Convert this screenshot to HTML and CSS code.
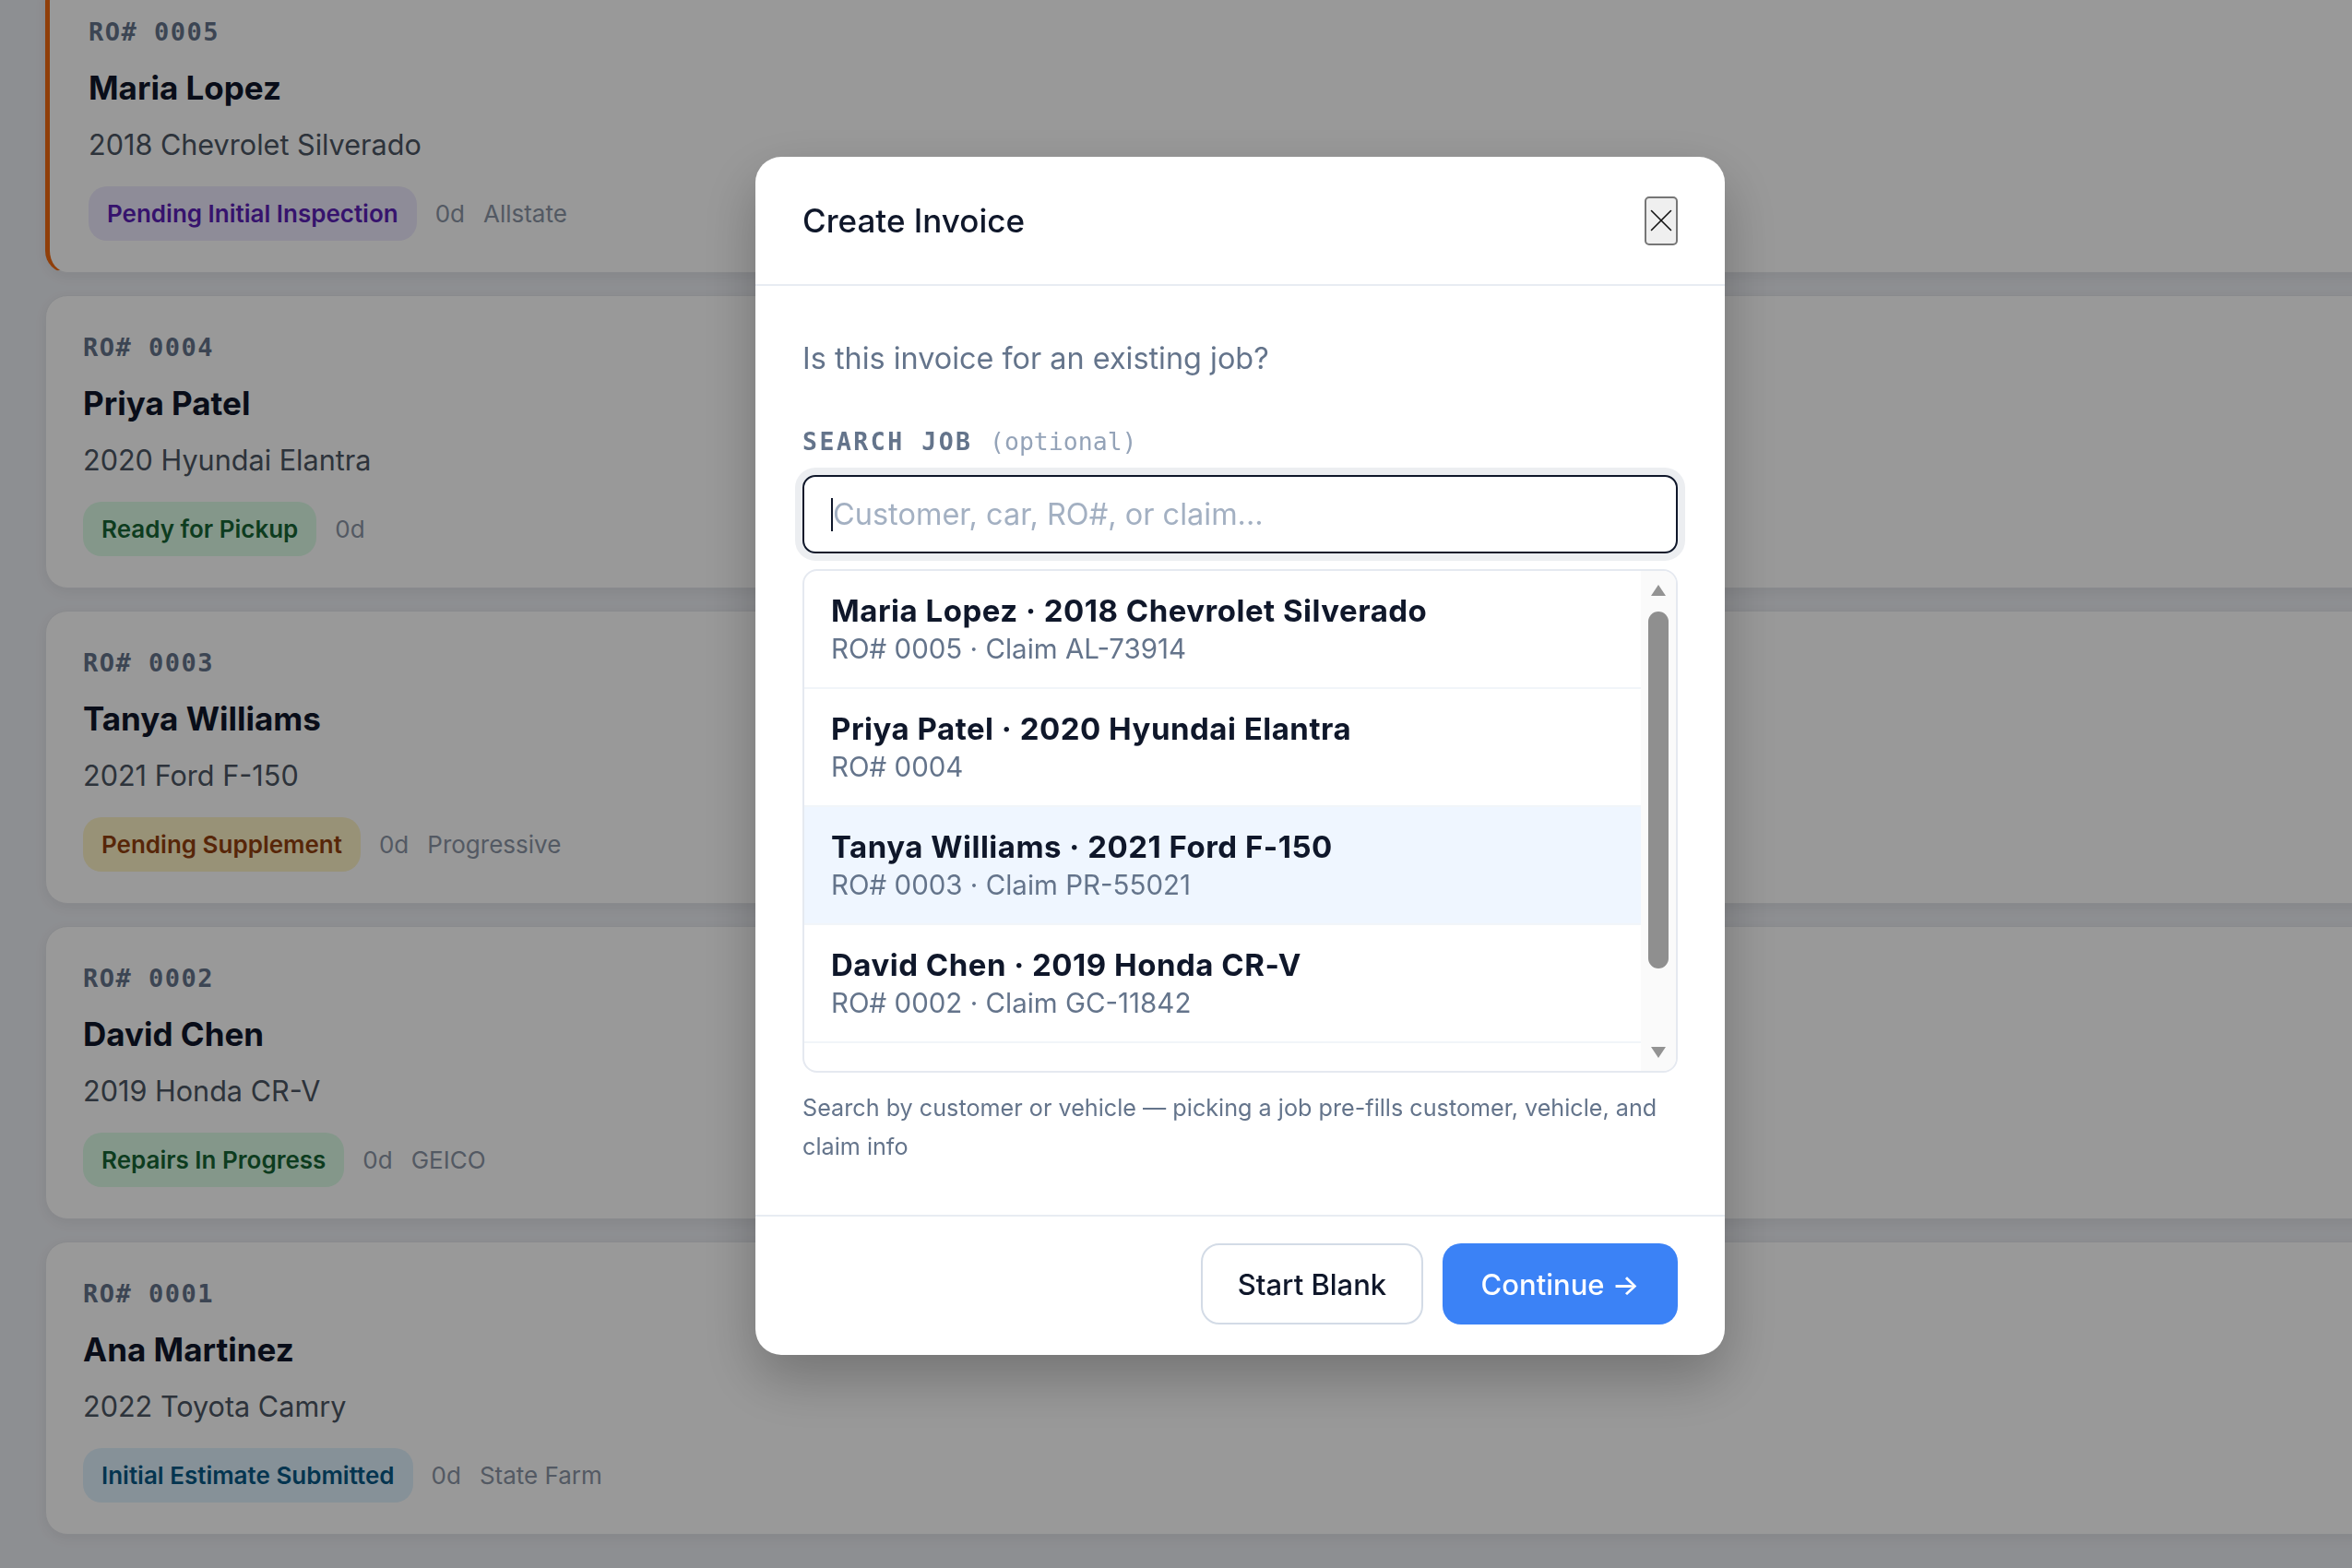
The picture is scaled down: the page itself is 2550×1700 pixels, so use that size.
FILE: index.html
```html
<!DOCTYPE html>
<html>
<head>
    <meta charset="UTF-8">
    <title>Jobs - Create Invoice</title>
    <link rel="stylesheet" href="styles.css">
</head>
<body>
    <div class="jobs">
        <div class="job-card active">
            <div class="ro">RO# 0005</div>
            <div class="job-name">Maria Lopez</div>
            <div class="job-vehicle">2018 Chevrolet Silverado</div>
            <div class="job-meta">
                <span class="status status-inspection">Pending Initial Inspection</span>
                <span>0d</span>
                <span>Allstate</span>
            </div>
        </div>
        <div class="job-card">
            <div class="ro">RO# 0004</div>
            <div class="job-name">Priya Patel</div>
            <div class="job-vehicle">2020 Hyundai Elantra</div>
            <div class="job-meta">
                <span class="status status-ready">Ready for Pickup</span>
                <span>0d</span>
            </div>
        </div>
        <div class="job-card">
            <div class="ro">RO# 0003</div>
            <div class="job-name">Tanya Williams</div>
            <div class="job-vehicle">2021 Ford F-150</div>
            <div class="job-meta">
                <span class="status status-supplement">Pending Supplement</span>
                <span>0d</span>
                <span>Progressive</span>
            </div>
        </div>
        <div class="job-card">
            <div class="ro">RO# 0002</div>
            <div class="job-name">David Chen</div>
            <div class="job-vehicle">2019 Honda CR-V</div>
            <div class="job-meta">
                <span class="status status-repair">Repairs In Progress</span>
                <span>0d</span>
                <span>GEICO</span>
            </div>
        </div>
        <div class="job-card">
            <div class="ro">RO# 0001</div>
            <div class="job-name">Ana Martinez</div>
            <div class="job-vehicle">2022 Toyota Camry</div>
            <div class="job-meta">
                <span class="status status-estimate">Initial Estimate Submitted</span>
                <span>0d</span>
                <span>State Farm</span>
            </div>
        </div>
    </div>

    <div class="overlay">
        <div class="modal">
            <div class="modal-header">
                <h2>Create Invoice</h2>
                <button class="close-btn" aria-label="Close">
                    <svg width="24" height="24" viewBox="0 0 24 24" fill="none" stroke="#111" stroke-width="1.6" stroke-linecap="round">
                        <path d="M1.5 1.5 L22.5 22.5 M22.5 1.5 L1.5 22.5"/>
                    </svg>
                </button>
            </div>

            <div class="modal-body">
                <p class="question">Is this invoice for an existing job?</p>
                <label class="field-label" for="job-search">SEARCH JOB <span>(optional)</span></label>
                <div class="search-box">
                    <span class="caret"></span>
                    <input class="search-input" id="job-search" type="text" placeholder="Customer, car, RO#, or claim...">
                </div>

                <div class="results">
                    <div class="results-list">
                        <div class="result">
                            <div class="result-title">Maria Lopez · 2018 Chevrolet Silverado</div>
                            <div class="result-sub">RO# 0005 · Claim AL-73914</div>
                        </div>
                        <div class="result">
                            <div class="result-title">Priya Patel · 2020 Hyundai Elantra</div>
                            <div class="result-sub">RO# 0004</div>
                        </div>
                        <div class="result selected">
                            <div class="result-title">Tanya Williams · 2021 Ford F-150</div>
                            <div class="result-sub">RO# 0003 · Claim PR-55021</div>
                        </div>
                        <div class="result">
                            <div class="result-title">David Chen · 2019 Honda CR-V</div>
                            <div class="result-sub">RO# 0002 · Claim GC-11842</div>
                        </div>
                    </div>
                    <div class="scrollbar">
                        <span class="arrow-up"></span>
                        <span class="thumb"></span>
                        <span class="arrow-down"></span>
                    </div>
                </div>

                <p class="hint">Search by customer or vehicle — picking a job pre-fills customer, vehicle, and claim info</p>
            </div>

            <div class="modal-footer">
                <button class="btn btn-secondary">Start Blank</button>
                <button class="btn btn-primary">Continue →</button>
            </div>
        </div>
    </div>
</body>
</html>
```

FILE: styles.css
```css
* {
    margin: 0;
    padding: 0;
    box-sizing: border-box;
}

body {
    font-family: Inter, "Liberation Sans", Arial, sans-serif;
    background: #eceef3;
    height: 100vh;
    overflow: hidden;
}

/* job board behind the dialog */
.jobs {
    display: flex;
    flex-direction: column;
    gap: 24px;
    margin: -22px -40px 0 49px;
}

.job-card {
    height: 318px;
    background: white;
    border: 1px solid #e5e7eb;
    border-radius: 24px;
    padding: 39px 40px 34px;
    box-shadow: 0 4px 14px rgba(0, 0, 0, 0.06);
}

.job-card.active {
    border-left: 5px solid #f06a12;
    padding-left: 42px;
}

.ro {
    font-family: "DejaVu Sans Mono", "Liberation Mono", monospace;
    font-size: 27px;
    font-weight: bold;
    letter-spacing: 1.5px;
    line-height: 34px;
    color: #64748b;
}

.job-name {
    margin-top: 23px;
    font-size: 35px;
    font-weight: 700;
    line-height: 40px;
    color: #0f172a;
}

.job-vehicle {
    margin-top: 22px;
    font-size: 30.6px;
    line-height: 40px;
    color: #4b5563;
}

.job-meta {
    margin-top: 25px;
    display: flex;
    align-items: center;
    gap: 20px;
    font-size: 26px;
    color: #8b95a5;
}

.status {
    height: 59px;
    display: flex;
    align-items: center;
    padding: 0 20px;
    border-radius: 20px;
    font-weight: 600;
}

.status-inspection { background: #ede9fe; color: #5b21b6; }
.status-ready { background: #dcfce7; color: #166534; }
.status-supplement { background: #fef3c7; color: #92400e; }
.status-repair { background: #dcfce7; color: #166534; }
.status-estimate { background: #e0f2fe; color: #075985; }

/* dialog */
.overlay {
    position: fixed;
    top: 0;
    left: 0;
    width: 100%;
    height: 100%;
    background: rgba(0, 0, 0, 0.4);
    display: flex;
    justify-content: center;
    align-items: center;
    padding: 0 0 61px 139px;
}

.modal {
    width: 1051px;
    background: white;
    border-radius: 28px;
    box-shadow: 0 25px 60px rgba(0, 0, 0, 0.25);
    overflow: hidden;
}

.modal-header {
    height: 140px;
    display: flex;
    align-items: center;
    justify-content: space-between;
    padding: 0 51px;
    border-bottom: 2px solid #e8ecf2;
}

.modal-header h2 {
    font-size: 35px;
    font-weight: 500;
    color: #0f172a;
}

.close-btn {
    width: 36px;
    height: 53px;
    display: flex;
    align-items: center;
    justify-content: center;
    background: #efefef;
    border: 2px solid #767676;
    border-radius: 5px;
}

.modal-body {
    padding: 52px 51px 53px;
}

.question {
    font-size: 32.4px;
    line-height: 54px;
    color: #64748b;
}

.field-label {
    display: block;
    margin-top: 45px;
    font-family: "DejaVu Sans Mono", "Liberation Mono", monospace;
    font-size: 26.5px;
    font-weight: bold;
    letter-spacing: 2.5px;
    line-height: 36px;
    color: #64748b;
}

.field-label span {
    font-weight: normal;
    letter-spacing: 0;
    color: #94a3b8;
}

/* focused search field */
.search-box {
    display: flex;
    align-items: center;
    height: 85px;
    margin-top: 18px;
    padding: 0 29px;
    border: 2px solid #0f172a;
    border-radius: 14px;
    box-shadow: 0 0 0 8px #eceef1;
}

.caret {
    width: 2px;
    height: 36px;
    background: #0f172a;
}

.search-input {
    flex: 1;
    min-width: 0;
    border: none;
    outline: none;
    font-family: inherit;
    font-size: 32.5px;
    color: #0f172a;
    background: transparent;
}

.search-input::placeholder {
    color: #a3b0c2;
}

.results {
    display: flex;
    height: 546px;
    margin-top: 17px;
    border: 2px solid #e5e9f0;
    border-radius: 16px;
    overflow: hidden;
}

.results-list {
    flex: 1;
    overflow: hidden;
}

.result {
    height: 128px;
    padding: 24px 29px 0;
    border-bottom: 2px solid #f1f5f9;
}

.result.selected {
    background: #eff6ff;
}

.result-title {
    font-size: 33px;
    font-weight: 700;
    letter-spacing: 0.5px;
    line-height: 38px;
    color: #0f172a;
}

.result-sub {
    font-size: 29.5px;
    line-height: 44px;
    color: #64748b;
}

.scrollbar {
    width: 38px;
    display: flex;
    flex-direction: column;
    align-items: center;
    background: #fafafa;
}

.arrow-up {
    margin-top: 15px;
    border-left: 8px solid transparent;
    border-right: 8px solid transparent;
    border-bottom: 12px solid #939393;
}

.thumb {
    width: 22px;
    height: 387px;
    margin-top: 17px;
    background: #8f8f8f;
    border-radius: 11px;
}

.arrow-down {
    margin-top: auto;
    margin-bottom: 14px;
    border-left: 8px solid transparent;
    border-right: 8px solid transparent;
    border-top: 12px solid #939393;
}

.hint {
    margin-top: 17px;
    font-size: 25.2px;
    line-height: 42px;
    color: #64748b;
}

.modal-footer {
    display: flex;
    justify-content: flex-end;
    gap: 21px;
    padding: 29px 51px 33px;
    border-top: 2px solid #e8ecf2;
}

.btn {
    height: 88px;
    font-family: inherit;
    font-size: 31px;
    font-weight: 500;
    border-radius: 20px;
    cursor: pointer;
}

.btn-secondary {
    width: 241px;
    background: white;
    color: #0f172a;
    border: 2px solid #d3dbe6;
}

.btn-primary {
    width: 255px;
    background: #3b82f6;
    color: white;
    border: none;
}
```
